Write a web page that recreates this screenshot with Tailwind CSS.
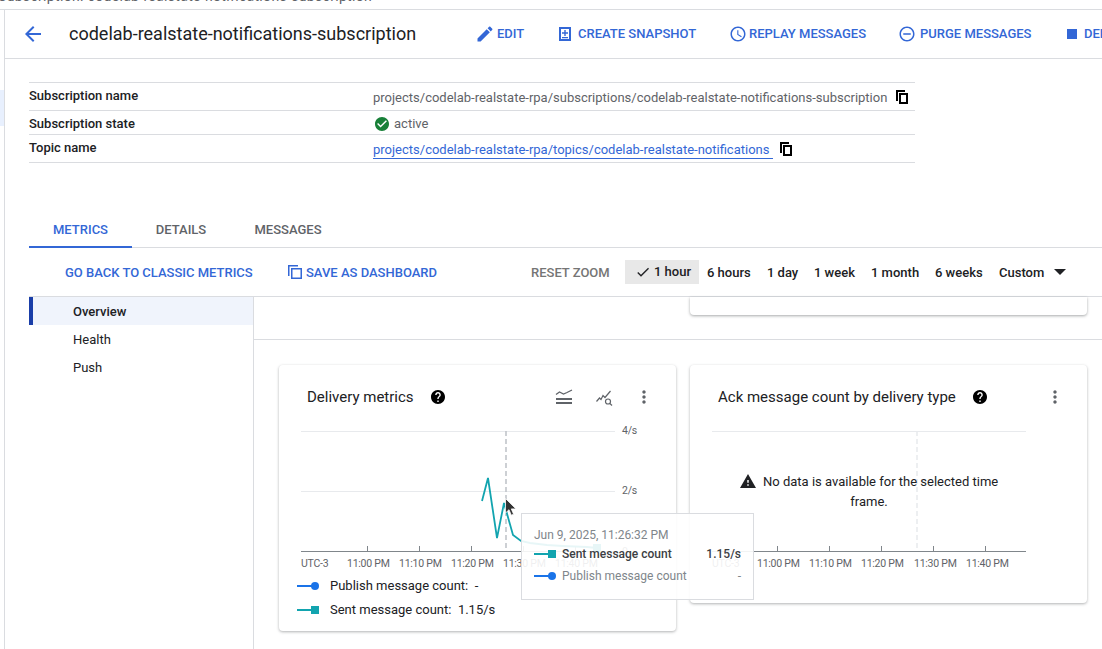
<!DOCTYPE html>
<html lang="en">
<head>
  <meta charset="UTF-8" />
  <title>codelab-realstate-notifications-subscription</title>
  <script src="https://cdn.jsdelivr.net/npm/@tailwindcss/browser@4"></script>
</head>
<body class="w-[1102px] h-[649px] overflow-hidden bg-white font-['Roboto',sans-serif] text-[13px] text-[#202124]">

  <!-- page title, cut off by the top of the window -->
  <div class="h-[10px] overflow-hidden border-b border-[#dadce0]">
    <div class="-mt-[14px] -ml-[2px] text-[14px] leading-[20px] tracking-[0.32px] text-[#5f6368] whitespace-nowrap">Subscription: codelab-realstate-notifications-subscription</div>
  </div>

  <div class="flex">
    <!-- rail -->
    <div class="w-[5px] h-[639px] shrink-0 border-r border-[#dadce0]">
      <div class="mt-[80px] h-[36px] w-[4px] bg-[#e8f0fe]"></div>
    </div>

    <div class="w-[1097px] shrink-0">
      <!-- header -->
      <div class="h-[49px] border-b border-[#dadce0] flex items-center whitespace-nowrap overflow-hidden text-[#3367d6] font-medium">
        <svg class="ml-[16px] w-[24px] h-[24px] fill-[#3367d6] shrink-0" viewBox="0 0 24 24"><path d="M20 11H7.830l5.590-5.590L12 4l-8 8 8 8 1.410-1.410L7.830 13H20v-2z"/></svg>
        <h1 class="ml-[24px] -mt-[2px] w-[406px] shrink-0 text-[18px] font-normal text-[#202124]">codelab-realstate-notifications-subscription</h1>
        <svg class="w-[20px] h-[20px] fill-[#3367d6] shrink-0" viewBox="0 0 24 24"><path d="M3 17.250V21h3.750L17.810 9.940l-3.750-3.750L3 17.250zM20.710 7.040c.39-.39.39-1.020 0-1.410l-2.340-2.340c-.39-.39-1.020-.39-1.410 0l-1.830 1.830 3.750 3.750 1.830-1.830z"/></svg>
        <span class="ml-[2px] w-[62px] shrink-0">EDIT</span>
        <svg class="w-[12px] h-[14px] fill-[#3367d6] shrink-0" viewBox="0 0 12 14"><path fill-rule="evenodd" d="M0 0h12v14H0zM2 2v10h8V2zM5.300 3h1.400v2.300H9v1.400H6.700V9H5.300V6.700H3V5.300h2.300zM3 10h6v1.200H3z"/></svg>
        <span class="ml-[7px] w-[151px] shrink-0">CREATE SNAPSHOT</span>
        <svg class="w-[18px] h-[18px] fill-[#3367d6] shrink-0" viewBox="0 0 24 24"><path d="M12 2C6.480 2 2 6.480 2 12s4.480 10 10 10 10-4.480 10-10S17.520 2 12 2zm0 18c-4.410 0-8-3.590-8-8s3.590-8 8-8 8 3.590 8 8-3.590 8-8 8zm.5-13H11v6l5.200 3.200.8-1.300-4.500-2.700V7z"/></svg>
        <span class="ml-[2px] w-[149px] shrink-0">REPLAY MESSAGES</span>
        <svg class="w-[18px] h-[18px] fill-[#3367d6] shrink-0" viewBox="0 0 24 24"><path d="M7 11v2h10v-2H7zm5-9C6.480 2 2 6.480 2 12s4.480 10 10 10 10-4.480 10-10S17.520 2 12 2zm0 18c-4.410 0-8-3.590-8-8s3.590-8 8-8 8 3.590 8 8-3.590 8-8 8z"/></svg>
        <span class="ml-[4px] w-[147px] shrink-0">PURGE MESSAGES</span>
        <span class="w-[10px] h-[10px] bg-[#3367d6] shrink-0"></span>
        <span class="ml-[7px] shrink-0">DELETE</span>
      </div>

      <!-- details table -->
      <div class="ml-[24px] mt-[23px] w-[886px] border-b border-[#dadce0]">
        <div class="flex h-[28px] border-t border-[#dadce0]">
          <div class="w-[344px] pt-[4px] font-medium leading-[18px]">Subscription name</div>
          <div class="flex items-center pt-[2px] text-[#5f6368]">
            projects/codelab-realstate-rpa/subscriptions/codelab-realstate-notifications-subscription
            <svg class="ml-[9px] -mt-[2px] w-[12px] h-[14px] fill-black" viewBox="0 0 12 14"><path fill-rule="evenodd" d="M0 0h9v2H2v9H0zM3 3h9v11H3zM5 5v7h5V5z"/></svg>
          </div>
        </div>
        <div class="flex h-[24px] border-t border-[#dadce0]">
          <div class="w-[344px] flex items-center pt-[2px] font-medium">Subscription state</div>
          <div class="flex items-center pt-[2px] text-[#5f6368]">
            <svg class="ml-[2px] mr-[5px] w-[14px] h-[14px] fill-[#188038]" viewBox="2 2 20 20"><path d="M12 2C6.480 2 2 6.480 2 12s4.480 10 10 10 10-4.480 10-10S17.520 2 12 2zm-2 15l-5-5 1.410-1.410L10 14.170l7.590-7.590L19 8l-9 9z"/></svg>
            active
          </div>
        </div>
        <div class="flex h-[28px] border-t border-[#dadce0]">
          <div class="w-[344px] pt-[4px] font-medium leading-[18px]">Topic name</div>
          <div class="flex items-start pt-[4px]">
            <a class="h-[20px] w-[400px] leading-[22px] border-b-[1px] border-[#3367d6] text-[#3367d6]">projects/codelab-realstate-rpa/topics/codelab-realstate-notifications</a>
            <svg class="ml-[7px] mt-[3px] w-[12px] h-[14px] fill-black" viewBox="0 0 12 14"><path fill-rule="evenodd" d="M0 0h9v2H2v9H0zM3 3h9v11H3zM5 5v7h5V5z"/></svg>
          </div>
        </div>
      </div>

      <!-- tabs -->
      <div class="ml-[24px] mt-[50px] h-[35px] flex border-b border-[#dadce0] font-medium text-[#5f6368]">
        <div class="w-[103px] h-[35px] flex items-center justify-center border-b-[2px] border-[#3367d6] text-[#3367d6]">METRICS</div>
        <div class="w-[98px] h-[34px] flex items-center justify-center">DETAILS</div>
        <div class="w-[116px] h-[34px] flex items-center justify-center">MESSAGES</div>
      </div>

      <!-- chart toolbar -->
      <div class="ml-[24px] h-[49px] pt-[2px] flex items-center border-b border-[#dadce0] font-medium whitespace-nowrap">
        <span class="ml-[36px] w-[222px] text-[#3367d6]">GO BACK TO CLASSIC METRICS</span>
        <svg class="w-[14px] h-[14px] fill-[#3367d6] -mt-[2px] ml-[1px]" viewBox="0 0 14 14"><path fill-rule="evenodd" d="M0 0h10v1.500H1.500V11H0zM3 3h11v11H3zM4.500 4.500v8h8v-8z"/></svg>
        <span class="ml-[4px] w-[225px] text-[#3367d6]">SAVE AS DASHBOARD</span>
        <span class="w-[94px] text-[#757575]">RESET ZOOM</span>
        <span class="w-[74px] h-[24px] -mt-[2px] flex items-center bg-[#e8e8e8] pl-[10px]">
          <svg class="w-[16px] h-[16px] fill-[#202124] mr-[3px]" viewBox="0 0 24 24"><path d="M9 16.170L4.830 12l-1.420 1.410L9 19 21 7l-1.410-1.410z"/></svg>
          1 hour
        </span>
        <span class="ml-[8px] w-[60px]">6 hours</span>
        <span class="w-[47px]">1 day</span>
        <span class="w-[57px]">1 week</span>
        <span class="w-[64px]">1 month</span>
        <span class="w-[64px]">6 weeks</span>
        <span class="w-[55px]">Custom</span>
        <span class="w-0 h-0 -mt-[2px] border-x-[6px] border-x-transparent border-t-[6px] border-t-[#202124]"></span>
      </div>

      <div class="ml-[24px] flex">
        <!-- side nav -->
        <div class="w-[225px] h-[352px] shrink-0 border-r border-[#dadce0]">
          <div class="h-[28px] flex items-center pt-[2px] pl-[40px] border-l-[4px] border-[#1a3ea8] bg-[#f0f4fc] font-medium">Overview</div>
          <div class="h-[28px] flex items-center pt-[2px] pl-[44px]">Health</div>
          <div class="h-[28px] flex items-center pt-[2px] pl-[44px]">Push</div>
        </div>

        <div class="w-[848px] shrink-0">
          <!-- previous row of charts, scrolled away -->
          <div class="h-[43px] border-b border-[#dadce0]">
            <div class="ml-[436px] w-[397px] h-[18px] bg-white rounded-b-[4px] shadow-[0_1px_3px_rgba(60,64,67,0.45)]"></div>
          </div>

          <div class="relative flex items-start gap-[14px] pl-[25px] pt-[25px]">
            <!-- Delivery metrics -->
            <div class="w-[397px] h-[266px] shrink-0 bg-white rounded-[4px] shadow-[0_1px_3px_rgba(60,64,67,0.4)]">
              <div class="h-[48px] flex items-center pl-[28px] pt-[16px]">
                <span class="text-[15px] w-[124px]">Delivery metrics</span>
                <svg class="w-[14px] h-[14px] fill-black" viewBox="2 2 20 20"><path d="M12 2C6.480 2 2 6.480 2 12s4.480 10 10 10 10-4.480 10-10S17.520 2 12 2zm1 17h-2v-2h2v2zm2.070-7.750l-.9.920C13.450 12.900 13 13.500 13 15h-2v-.5c0-1.100.45-2.100 1.170-2.830l1.240-1.260c.37-.36.59-.86.59-1.410 0-1.100-.9-2-2-2s-2 .9-2 2H8c0-2.210 1.790-4 4-4s4 1.790 4 4c0 .88-.36 1.680-.93 2.250z"/></svg>
                <svg class="ml-[110px] w-[18px] h-[18px] fill-none stroke-[#5f6368]" viewBox="0 0 18 18"><path stroke-width="1.300" d="M1 6.500l3.500-2.500 4 2 3.500-1.500 5-2.500"/><path stroke-width="2" d="M1 11h16M1 15h16"/></svg>
                <svg class="ml-[22px] w-[18px] h-[18px] fill-none stroke-[#5f6368] stroke-[1.200]" viewBox="0 0 18 18"><path d="M1.500 13.500L4.500 10L6 11.500L8 7.500L10 9.500L15.500 3"/><circle cx="13" cy="13.500" r="2.500"/><path d="M14.800 15.300L17 17.500"/></svg>
                <svg class="ml-[21px] w-[20px] h-[20px] fill-[#5f6368]" viewBox="0 0 24 24"><path d="M12 8c1.100 0 2-.9 2-2s-.9-2-2-2-2 .9-2 2 .9 2 2 2zm0 2c-1.100 0-2 .9-2 2s.9 2 2 2 2-.9 2-2-.9-2-2-2zm0 6c-1.100 0-2 .9-2 2s.9 2 2 2 2-.9 2-2-.9-2-2-2z"/></svg>
              </div>
              <!-- viewBox uses page coordinates -->
              <svg class="block w-[397px] h-[160px]" viewBox="279 413 397 160">
                <path class="stroke-[#e8eaed] fill-none" d="M301 431.500H615M301 491.500H615"/>
                <path class="stroke-[#80868b] fill-none" d="M301 551.500H615M367.500 546v5M419.500 546v5M471.500 546v5M523.500 546v5M575.500 546v5"/>
                <path class="stroke-[#bdc1c6] stroke-[1.500] fill-none" stroke-dasharray="5 3" d="M506 431V549"/>
                <path class="stroke-[#12a4af] stroke-[1.800] fill-none" d="M482 501L488 478L497 538L504 503L513 535L521 541L530 543L547 545L563 546L587 547L597 548"/>
                <rect class="fill-[#12a4af]" x="593" y="544" width="8" height="8"/>
                <g class="fill-[#5f6368] text-[10.500px] tracking-[-0.25px]" style="font-family: Roboto">
                  <text x="622" y="434">4/s</text>
                  <text x="622" y="494">2/s</text>
                  <text x="622" y="555">0</text>
                  <text x="301" y="567">UTC-3</text>
                  <text x="347" y="567">11:00 PM</text>
                  <text x="399" y="567">11:10 PM</text>
                  <text x="451" y="567">11:20 PM</text>
                  <text x="503" y="567">11:30 PM</text>
                  <text x="555" y="567">11:40 PM</text>
                </g>
              </svg>
              <div class="pl-[18px] pt-[1px]">
                <div class="h-[24px] flex items-center">
                  <span class="w-[15px] h-[2px] shrink-0 bg-[#1a73e8]"></span>
                  <span class="-ml-[1px] w-[8px] h-[8px] shrink-0 rounded-full bg-[#1a73e8]"></span>
                  <span class="ml-[11px]">Publish message count:&nbsp; -</span>
                </div>
                <div class="h-[24px] flex items-center">
                  <span class="w-[15px] h-[2px] shrink-0 bg-[#12a4af]"></span>
                  <span class="-ml-[1px] w-[8px] h-[8px] shrink-0 bg-[#12a4af]"></span>
                  <span class="ml-[11px]">Sent message count:&nbsp; 1.15/s</span>
                </div>
              </div>
            </div>

            <!-- Ack message count -->
            <div class="relative w-[397px] h-[238px] shrink-0 bg-white rounded-[4px] shadow-[0_1px_3px_rgba(60,64,67,0.4)]">
              <div class="h-[48px] flex items-center pl-[28px] pt-[16px]">
                <span class="text-[15px] w-[255px] whitespace-nowrap">Ack message count by delivery type</span>
                <svg class="w-[14px] h-[14px] fill-black" viewBox="2 2 20 20"><path d="M12 2C6.480 2 2 6.480 2 12s4.480 10 10 10 10-4.480 10-10S17.520 2 12 2zm1 17h-2v-2h2v2zm2.070-7.750l-.9.920C13.450 12.900 13 13.500 13 15h-2v-.5c0-1.100.45-2.100 1.170-2.830l1.240-1.260c.37-.36.59-.86.59-1.410 0-1.100-.9-2-2-2s-2 .9-2 2H8c0-2.210 1.790-4 4-4s4 1.790 4 4c0 .88-.36 1.680-.93 2.250z"/></svg>
                <svg class="ml-[58px] w-[20px] h-[20px] fill-[#5f6368]" viewBox="0 0 24 24"><path d="M12 8c1.100 0 2-.9 2-2s-.9-2-2-2-2 .9-2 2 .9 2 2 2zm0 2c-1.100 0-2 .9-2 2s.9 2 2 2 2-.9 2-2-.9-2-2-2zm0 6c-1.100 0-2 .9-2 2s.9 2 2 2 2-.9 2-2-.9-2-2-2z"/></svg>
              </div>
              <svg class="block w-[397px] h-[160px]" viewBox="690 413 397 160">
                <path class="stroke-[#e8eaed] fill-none" d="M712 431.500H1026"/>
                <path class="stroke-[#80868b] fill-none" d="M712 551.500H1026M777.500 546v5M829.500 546v5M881.500 546v5M933.500 546v5M985.500 546v5"/>
                <path class="stroke-[#e8eaed] stroke-[1.500] fill-none" stroke-dasharray="5 3" d="M917 431V549"/>
                <g class="fill-[#5f6368] text-[10.500px] tracking-[-0.25px]" style="font-family: Roboto">
                  <text x="712" y="567">UTC-3</text>
                  <text x="757" y="567">11:00 PM</text>
                  <text x="809" y="567">11:10 PM</text>
                  <text x="861" y="567">11:20 PM</text>
                  <text x="914" y="567">11:30 PM</text>
                  <text x="966" y="567">11:40 PM</text>
                </g>
              </svg>
              <!-- no data message sits over the chart -->
              <div class="absolute left-[49px] top-[107px] w-[260px] text-center leading-[20px]">
                <svg class="inline-block align-[-3px] mr-[4px] w-[16px] h-[16px] fill-[#202124]" viewBox="1 2 22 19"><path d="M1 21h22L12 2 1 21zm12-3h-2v-2h2v2zm0-4h-2v-4h2v4z"/></svg>
                No data is available for the selected time frame.
              </div>
            </div>

            <!-- mouse pointer -->
            <svg class="absolute left-[251px] top-[158px] w-[12px] h-[20px]" viewBox="0 0 12 20"><path class="fill-[#333] stroke-white stroke-[0.800]" d="M0.500 0.500V15l3.500-3.300 2.300 5.500 2.300-1-2.300-5.300h4.700z"/></svg>

            <!-- hover tooltip -->
            <div class="absolute left-[267px] top-[173px] w-[233px] h-[87px] bg-white/90 border border-[#dadce0] pl-[12px] pr-[12px] pt-[12px] text-[12px]">
              <div class="h-[17px] leading-[18px] text-[#80868b]">Jun 9, 2025, 11:26:32 PM</div>
              <div class="h-[22px] flex items-center font-medium text-[#3c4043]">
                <span class="w-[15px] h-[2px] shrink-0 bg-[#12a4af]"></span>
                <span class="-ml-[1px] w-[8px] h-[8px] shrink-0 bg-[#12a4af]"></span>
                <span class="ml-[6px] flex-1">Sent message count</span>
                <span>1.15/s</span>
              </div>
              <div class="h-[22px] flex items-center text-[#80868b]">
                <span class="w-[15px] h-[2px] shrink-0 bg-[#1a73e8]"></span>
                <span class="-ml-[1px] w-[8px] h-[8px] shrink-0 rounded-full bg-[#1a73e8]"></span>
                <span class="ml-[6px] flex-1">Publish message count</span>
                <span>-</span>
              </div>
            </div>
          </div>
        </div>
      </div>
    </div>
  </div>
</body>
</html>
